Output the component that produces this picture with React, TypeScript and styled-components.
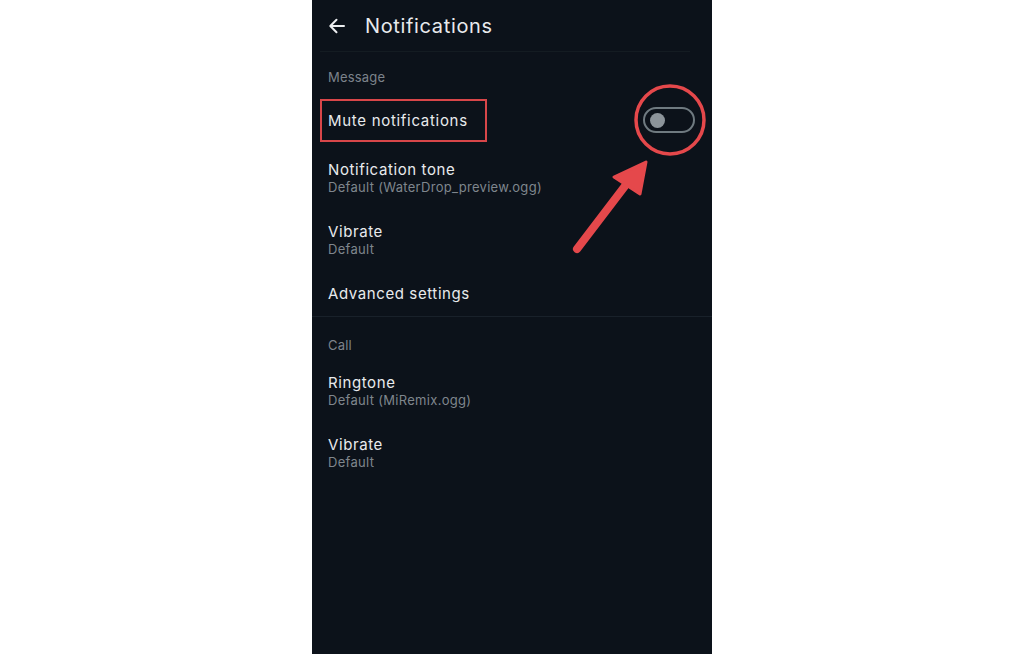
import React from "react";
import styled, { createGlobalStyle } from "styled-components";

const Global = createGlobalStyle`
  html, body { margin: 0; padding: 0; background: #ffffff; }
  body { font-family: Inter, "Noto Sans", Roboto, sans-serif; }
`;

const Page = styled.div`
  display: flex;
  justify-content: center;
  width: 1024px;
  height: 654px;
  background: #ffffff;
`;

const Phone = styled.div`
  position: relative;
  width: 400px;
  height: 654px;
  background: #0c121a;
  display: flex;
  flex-direction: column;
  overflow: hidden;
`;

const Header = styled.div`
  height: 51px;
  display: flex;
  align-items: center;
  padding-left: 16px;
  gap: 19px;
`;

const BackButton = styled.span`
  display: flex;
  width: 18px;
  height: 18px;
  align-items: center;
  justify-content: center;
`;

const Title = styled.h1`
  margin: 0;
  font-size: 20px;
  font-weight: 400;
  color: #e8eaed;
  letter-spacing: 0.65px;
`;

const Divider = styled.div<{ $inset?: boolean }>`
  height: 1px;
  background: ${(p) => (p.$inset ? "#141c22" : "#19212a")};
  margin: ${(p) => (p.$inset ? "0 22px 0 8px" : "0")};
`;

const SectionLabel = styled.div<{ $top: number; $bottom: number }>`
  padding: ${(p) => p.$top}px 16px ${(p) => p.$bottom}px;
  font-size: 13px;
  line-height: 16px;
  color: #7c838b;
  letter-spacing: 0.2px;
`;

const ToggleRow = styled.div`
  height: 46px;
  display: flex;
  align-items: center;
  justify-content: space-between;
  padding: 0 17px 0 16px;
`;

const Highlight = styled.span`
  display: inline-flex;
  align-items: center;
  height: 39px;
  margin-left: -8px;
  padding: 0 17px 0 6px;
  border: 2px solid #d84649;
  font-size: 15px;
  letter-spacing: 0.7px;
  color: #e8eaed;
`;

const Toggle = styled.span`
  display: flex;
  align-items: center;
  box-sizing: border-box;
  width: 52px;
  height: 26px;
  padding-left: 5px;
  border: 2px solid #6f7a80;
  border-radius: 14px;
`;

const Knob = styled.span`
  width: 15px;
  height: 15px;
  border-radius: 50%;
  background: #8c949a;
`;

const Row = styled.div<{ $bottom?: number }>`
  padding: 18px 16px ${(p) => p.$bottom ?? 9}px;
  display: flex;
  flex-direction: column;
`;

const RowTitle = styled.div`
  font-size: 15px;
  line-height: 18px;
  letter-spacing: 0.6px;
  color: #e8eaed;
`;

const RowSub = styled.div`
  font-size: 13px;
  line-height: 17px;
  letter-spacing: 0.3px;
  color: #7f868d;
`;

const Annotation = styled.svg`
  position: absolute;
  left: 0;
  top: 0;
  pointer-events: none;
`;

type Item = { title: string; sub?: string };

const SettingRow = ({ title, sub, bottom }: Item & { bottom?: number }) => (
  <Row $bottom={bottom}>
    <RowTitle>{title}</RowTitle>
    {sub && <RowSub>{sub}</RowSub>}
  </Row>
);

export default function App() {
  return (
    <>
      <Global />
      <Page>
        <Phone>
          <Header>
            <BackButton>
              <svg width="18" height="18" viewBox="0 0 18 18" fill="none">
                <path
                  d="M16 9H2.5M8.5 2.8L2.3 9l6.2 6.2"
                  stroke="#eceef0"
                  strokeWidth="2"
                  strokeLinecap="round"
                  strokeLinejoin="round"
                />
              </svg>
            </BackButton>
            <Title>Notifications</Title>
          </Header>
          <Divider $inset />
          <SectionLabel $top={17} $bottom={12}>Message</SectionLabel>
          <ToggleRow>
            <Highlight>Mute notifications</Highlight>
            <Toggle>
              <Knob />
            </Toggle>
          </ToggleRow>
          <SettingRow title="Notification tone" sub="Default (WaterDrop_preview.ogg)" />
          <SettingRow title="Vibrate" sub="Default" />
          <SettingRow title="Advanced settings" bottom={13} />
          <Divider />
          <SectionLabel $top={20} $bottom={3}>Call</SectionLabel>
          <SettingRow title="Ringtone" sub="Default (MiRemix.ogg)" />
          <SettingRow title="Vibrate" sub="Default" />
          <Annotation width="400" height="654" viewBox="0 0 400 654">
            <ellipse cx="358" cy="120" rx="34" ry="34" fill="none" stroke="#e5484b" strokeWidth="3.5" />
            <line x1="265" y1="249" x2="313" y2="186" stroke="#e5484b" strokeWidth="8" strokeLinecap="round" />
            <polygon points="334,162 302,177 328,194" fill="#e5484b" stroke="#e5484b" strokeWidth="3" strokeLinejoin="round" />
          </Annotation>
        </Phone>
      </Page>
    </>
  );
}
